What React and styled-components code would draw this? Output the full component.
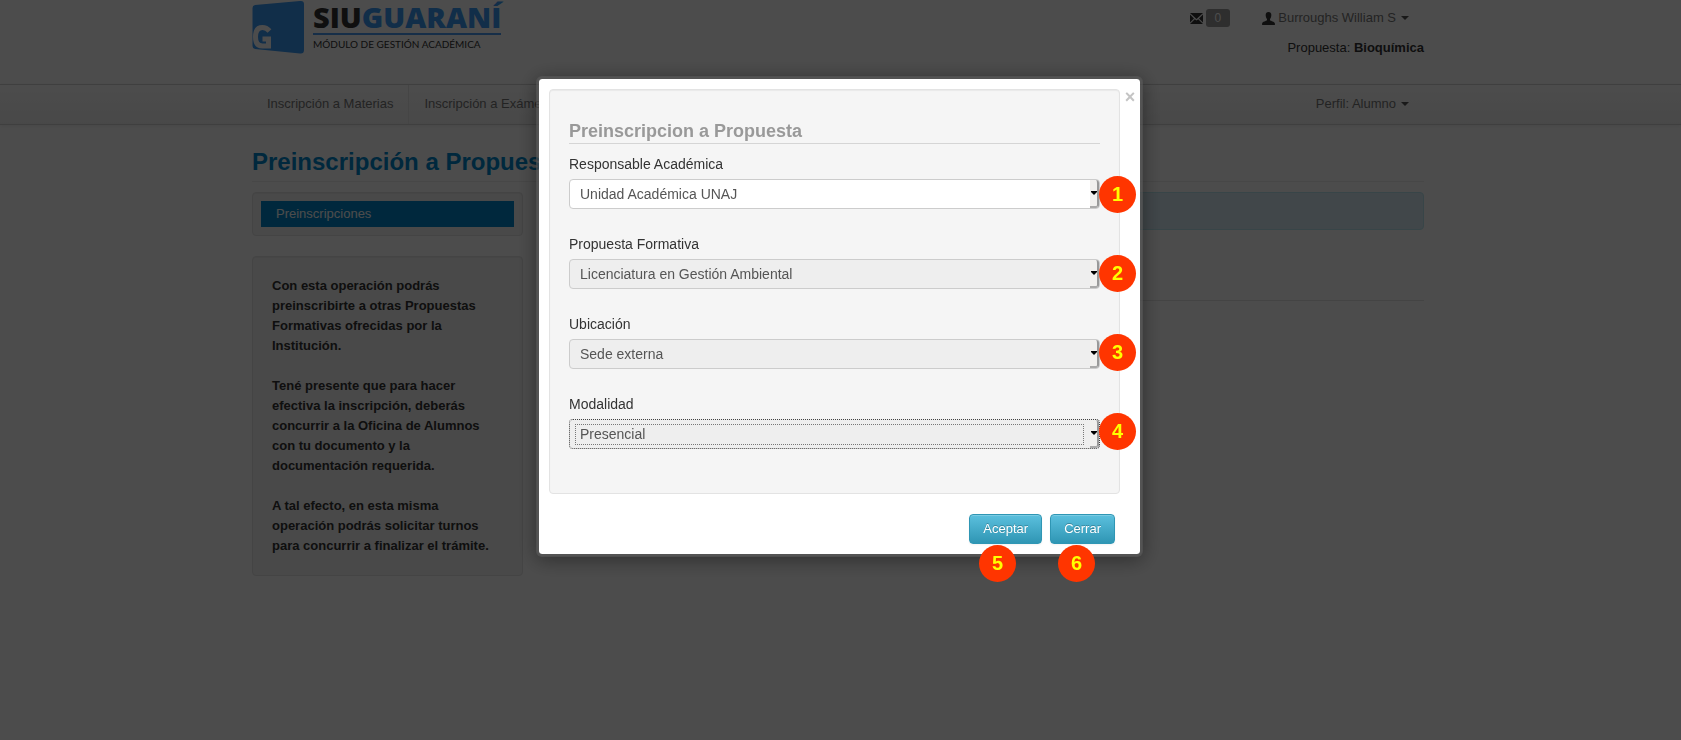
import React from "react";
import styled, { createGlobalStyle } from "styled-components";

const GlobalStyle = createGlobalStyle`
  * {
    box-sizing: border-box;
  }
  body {
    margin: 0;
    background: #fff;
    color: #333;
    font-family: "Liberation Sans", Arial, sans-serif;
    font-size: 13px;
    line-height: 20px;
  }
`;

const Page = styled.div`
  min-height: 100vh;
`;
const Container = styled.div`
  max-width: 1177px;
  margin: 0 auto;
  padding-right: 5px;
`;
const Header = styled(Container)`
  display: flex;
  justify-content: space-between;
  height: 84px;
`;
const Brand = styled.a`
  display: flex;
  gap: 9px;
  color: #333;
  text-decoration: none;
`;
const BrandName = styled.div`
  border-bottom: 2px solid #4a9cf0;
  font-family: "Open Sans", sans-serif;
  font-size: 29px;
  font-weight: 800;
  line-height: 33px;
  span {
    color: #3a99f5;
  }
`;
const BrandSub = styled.div`
  font-family: Lato, sans-serif;
  font-size: 10px;
  line-height: 18px;
`;
const UserArea = styled.div`
  display: flex;
  flex-direction: column;
  align-items: flex-end;
  gap: 10px;
  padding-top: 8px;
`;
const UserLinks = styled.div`
  display: flex;
  align-items: center;
  gap: 32px;
  padding-right: 15px;
`;
const UserLink = styled.a`
  display: flex;
  align-items: center;
  color: #777;
  text-decoration: none;
  svg {
    margin-right: 3px;
  }
`;
const Count = styled.span`
  padding: 2px 9px;
  border-radius: 3px;
  background: #999;
  color: #fff;
  font-size: 12px;
  line-height: 14px;
`;
const Caret = styled.span`
  margin-left: 5px;
  border-top: 4px solid #555;
  border-left: 4px solid transparent;
  border-right: 4px solid transparent;
`;
const Navbar = styled.nav`
  border: 1px solid #d4d4d4;
  border-width: 1px 0;
  background: linear-gradient(#fff, #f2f2f2);
  box-shadow: 0 1px 4px rgba(0, 0, 0, 0.07);
`;
const NavList = styled(Container)`
  display: flex;
`;
const NavLink = styled.a`
  display: flex;
  align-items: center;
  padding: 9px 15px 10px;
  border-right: ${(props) => (props.$last ? "0" : "1px solid #e8e8e8")};
  margin-left: ${(props) => (props.$last ? "auto" : "0")};
  color: #777;
  text-decoration: none;
`;
const PageTitle = styled.h2`
  margin: 18px 0 10px;
  border-bottom: 1px solid #eee;
  color: #0088cc;
  font-size: 24px;
  line-height: 38px;
`;
const Columns = styled.div`
  display: grid;
  grid-template-columns: 271px 1fr;
  gap: 30px;
`;
const Well = styled.div`
  border: 1px solid #e3e3e3;
  border-radius: 4px;
  background: #f5f5f5;
  box-shadow: inset 0 1px 1px rgba(0, 0, 0, 0.05);
`;
const MenuWell = styled(Well)`
  margin-bottom: 20px;
  padding: 8px;
`;
const MenuLink = styled.a`
  display: block;
  padding: 3px 15px;
  background: #0088cc;
  color: #fff;
  text-decoration: none;
`;
const HelpWell = styled(Well)`
  padding: 19px;
  font-weight: bold;
  p {
    margin: 0 0 20px;
  }
  p:last-child {
    margin: 0;
  }
`;
const Alert = styled.div`
  height: 38px;
  border: 1px solid #bce8f1;
  border-radius: 4px;
  background: #d9edf7;
`;
const Rule = styled.hr`
  margin: 70px 0 0;
  border: 0;
  border-top: 1px solid #e5e5e5;
`;

const Overlay = styled.div`
  position: fixed;
  inset: 0;
  display: flex;
  justify-content: center;
  align-items: flex-start;
  padding: 76px 2px 0 0;
  background: rgba(0, 0, 0, 0.7);
`;
const Modal = styled.div`
  position: relative;
  width: 607px;
  border: 3px solid rgba(90, 90, 90, 0.6);
  border-radius: 6px;
  background: #fff;
  background-clip: padding-box;
  box-shadow: 0 3px 20px rgba(0, 0, 0, 0.4);
`;
const ModalBody = styled.div`
  display: flex;
  align-items: flex-start;
  padding: 10px 0 0 10px;
`;
const Form = styled(Well)`
  flex: 1;
  padding: 30px 19px 44px;
  font-size: 14px;
`;
const Close = styled.button`
  width: 20px;
  margin-top: -2px;
  padding: 0;
  border: 0;
  background: none;
  color: #c4c4c4;
  font: bold 18px/20px "Liberation Sans", sans-serif;
`;
const Legend = styled.h3`
  margin: 0 0 10px;
  border-bottom: 1px solid #d5d5d5;
  color: #999;
  font-size: 18px;
  line-height: 23px;
`;
const Field = styled.div`
  height: 80px;
  &:last-child {
    height: 55px;
  }
`;
const Label = styled.label`
  display: block;
  margin-bottom: 5px;
`;
const SelectBox = styled.div`
  position: relative;
`;
const Select = styled.select`
  display: block;
  width: 100%;
  height: 30px;
  padding: 0 20px 0 10px;
  appearance: none;
  border: 1px ${(props) => (props.$focused ? "dotted #444" : "solid #ccc")};
  border-radius: 4px;
  outline: none;
  background: ${(props) => (props.$white ? "#fff" : "#eee")};
  color: #555;
  font: 14px/20px "Liberation Sans", sans-serif;
`;
const Arrow = styled.span`
  position: absolute;
  top: 1px;
  right: 1px;
  bottom: 1px;
  display: flex;
  align-items: center;
  justify-content: flex-end;
  width: 9px;
  border-right: 2px solid #999;
  border-bottom: 2px solid #aaa;
  border-radius: 0 3px 3px 0;
  background: #f1f0ee;
  pointer-events: none;
`;
const FocusRing = styled.span`
  position: absolute;
  inset: 5px 16px 4px 6px;
  border: 1px dotted #777;
  pointer-events: none;
`;
const Footer = styled.div`
  display: flex;
  justify-content: flex-end;
  gap: 8px;
  padding: 20px 25px 10px;
`;
const Button = styled.button`
  padding: 4px 13px;
  border: 1px solid #2f96b4;
  border-radius: 4px;
  background: linear-gradient(#5bc0de, #2f96b4);
  box-shadow: inset 0 1px 0 rgba(255, 255, 255, 0.2), 0 1px 2px rgba(0, 0, 0, 0.05);
  color: #fff;
  font: 13px/20px "Liberation Sans", sans-serif;
  text-shadow: 0 -1px 0 rgba(0, 0, 0, 0.25);
`;
const Steps = styled.div`
  position: absolute;
  display: flex;
  gap: 42px;
`;
const FieldSteps = styled(Steps)`
  top: 97px;
  right: 4px;
  flex-direction: column;
`;
const ButtonSteps = styled(Steps)`
  right: 45px;
  bottom: -28px;
`;
const Step = styled.span`
  width: 37px;
  height: 37px;
  border-radius: 50%;
  background: #ff3500;
  color: #ff0;
  font-size: 20px;
  font-weight: bold;
  line-height: 37px;
  text-align: center;
`;

const fields = [
  { id: "responsable", label: "Responsable Académica", value: "Unidad Académica UNAJ", white: true },
  { id: "propuesta", label: "Propuesta Formativa", value: "Licenciatura en Gestión Ambiental" },
  { id: "ubicacion", label: "Ubicación", value: "Sede externa" },
  { id: "modalidad", label: "Modalidad", value: "Presencial", focused: true },
];

function Logo() {
  return (
    <svg width="52" height="54" viewBox="0 0 52 54" aria-hidden="true">
      <path d="M3 5L48 1Q52 .5 52 4V50Q52 54 48 53.500L3 49Q.5 48.500 .5 46V8Q.5 5.300 3 5Z" fill="#3a99f5" />
      <path
        d="M17.500 31Q14.500 27.500 10.500 27.500Q3.500 27.500 3.500 37Q3.500 46 10.500 46H16.500V39H10.500"
        fill="none"
        stroke="#fff"
        strokeWidth="5"
      />
    </svg>
  );
}

function MailIcon() {
  return (
    <svg width="13" height="11" viewBox="0 0 13 11" aria-hidden="true">
      <path d="M0 0H13L6.500 6ZM0 1.500L4 5.500L0 9.500ZM13 1.500V9.500L9 5.500ZM0 11L4.800 6.200L6.500 7.600L8.200 6.200L13 11Z" fill="#333" />
    </svg>
  );
}

function UserIcon() {
  return (
    <svg width="13" height="13" viewBox="0 0 13 13" aria-hidden="true">
      <path d="M6.500 0C8.500 0 9.500 1.400 9.300 3.500C9.200 5.300 8.500 6.300 8 7V8.300C9 9.200 12.500 9.600 12.900 11.500V13H.1V11.500C.5 9.600 4 9.200 5 8.300V7C4.500 6.300 3.800 5.300 3.700 3.500C3.500 1.400 4.500 0 6.500 0Z" fill="#333" />
    </svg>
  );
}

function PreinscripcionModal() {
  return (
    <Overlay>
      <Modal role="dialog" aria-modal="true">
        <ModalBody>
          <Form as="form">
            <Legend>Preinscripcion a Propuesta</Legend>
            {fields.map((field) => (
              <Field key={field.id}>
                <Label htmlFor={field.id}>{field.label}</Label>
                <SelectBox>
                  <Select id={field.id} $white={field.white} $focused={field.focused}>
                    <option>{field.value}</option>
                  </Select>
                  <Arrow>
                    <svg width="6" height="4" viewBox="0 0 6 4">
                      <path d="M0 0H6V1L3 4L0 1Z" fill="#000" />
                    </svg>
                  </Arrow>
                  {field.focused && <FocusRing />}
                </SelectBox>
              </Field>
            ))}
          </Form>
          <Close type="button" aria-label="Cerrar ventana">×</Close>
        </ModalBody>
        <Footer>
          <Button type="button">Aceptar</Button>
          <Button type="button">Cerrar</Button>
        </Footer>
        <FieldSteps>
          <Step>1</Step>
          <Step>2</Step>
          <Step>3</Step>
          <Step>4</Step>
        </FieldSteps>
        <ButtonSteps>
          <Step>5</Step>
          <Step>6</Step>
        </ButtonSteps>
      </Modal>
    </Overlay>
  );
}

function App() {
  return (
    <Page>
      <GlobalStyle />
      <Header as="header">
        <Brand href="#">
          <Logo />
          <div>
            <BrandName>
              SIU<span>GUARANÍ</span>
            </BrandName>
            <BrandSub>MÓDULO DE GESTIÓN ACADÉMICA</BrandSub>
          </div>
        </Brand>
        <UserArea>
          <UserLinks>
            <UserLink href="#">
              <MailIcon />
              <Count>0</Count>
            </UserLink>
            <UserLink href="#">
              <UserIcon />
              Burroughs William S
              <Caret />
            </UserLink>
          </UserLinks>
          <div>
            Propuesta: <b>Bioquímica</b>
          </div>
        </UserArea>
      </Header>
      <Navbar>
        <NavList>
          <NavLink href="#">Inscripción a Materias</NavLink>
          <NavLink href="#">Inscripción a Exámenes</NavLink>
          <NavLink href="#" $last>
            Perfil: Alumno
            <Caret />
          </NavLink>
        </NavList>
      </Navbar>
      <Container as="main">
        <PageTitle>Preinscripción a Propuestas</PageTitle>
        <Columns>
          <aside>
            <MenuWell>
              <MenuLink href="#">Preinscripciones</MenuLink>
            </MenuWell>
            <HelpWell>
              <p>
                Con esta operación podrás preinscribirte a otras Propuestas
                Formativas ofrecidas por la Institución.
              </p>
              <p>
                Tené presente que para hacer efectiva la inscripción, deberás
                concurrir a la Oficina de Alumnos con tu documento y la
                documentación requerida.
              </p>
              <p>
                A tal efecto, en esta misma operación podrás solicitar turnos
                para concurrir a finalizar el trámite.
              </p>
            </HelpWell>
          </aside>
          <section>
            <Alert />
            <Rule />
          </section>
        </Columns>
      </Container>
      <PreinscripcionModal />
    </Page>
  );
}

export default App;
